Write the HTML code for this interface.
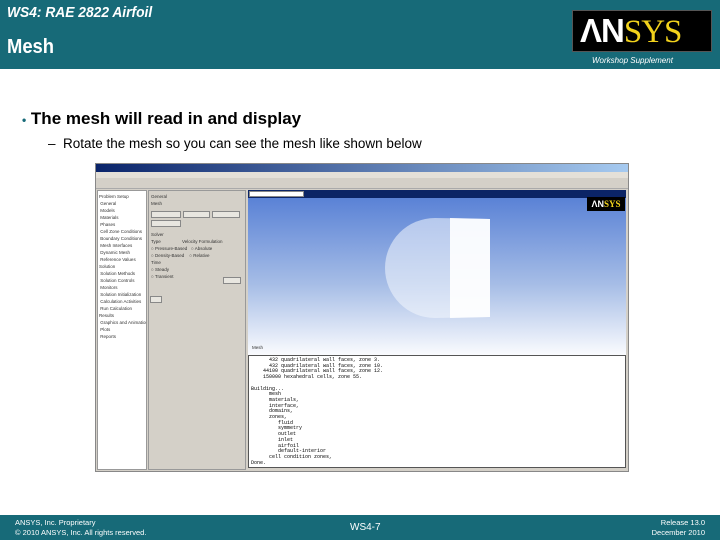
<!DOCTYPE html>
<html><head><style>
*{margin:0;padding:0;box-sizing:border-box}
body{width:720px;height:540px;position:relative;background:#fff;font-family:"Liberation Sans",sans-serif;overflow:hidden}
.a{position:absolute}
.hdr{left:0;top:0;width:720px;height:69px;background:#176a78}
.ftr{left:0;top:515px;width:720px;height:25px;background:#176a78;color:#fff;font-size:8px}
.mono{font-family:"Liberation Mono",monospace;font-size:5px;line-height:5.7px;color:#000;white-space:pre}
.t{font-size:4.5px;color:#333;line-height:7px;white-space:nowrap}
</style></head><body>
<div class="a hdr"></div>
<div class="a" style="left:7px;top:4px;color:#fff;font-size:15px;font-style:italic;font-weight:bold;transform:scaleX(.92);transform-origin:left">WS4: RAE 2822 Airfoil</div>
<div class="a" style="left:7px;top:36px;color:#fff;font-size:20px;font-weight:bold;transform:scaleX(.92);transform-origin:left">Mesh</div>
<div class="a" style="left:572px;top:10px;width:140px;height:42px;background:#000;border:1px solid #555;overflow:hidden"></div>
<div class="a" style="left:580px;top:11px;font-family:'Liberation Serif',serif;font-size:33px;line-height:40px;letter-spacing:-1px"><span style="color:#fff;font-family:'Liberation Sans';font-weight:bold">ΛN</span><span style="color:#f2d21c">SYS</span></div>
<div class="a" style="left:592px;top:56px;color:#fff;font-size:8px;font-style:italic">Workshop Supplement</div>

<div class="a" style="left:22px;top:109px;font-size:17px;font-weight:bold;color:#000"><span style="color:#176a78;font-size:12px">•</span> The mesh will read in and display</div>
<div class="a" style="left:48px;top:136px;font-size:13.5px;color:#000">– &nbsp;Rotate the mesh so you can see the mesh like shown below</div>

<div class="a" style="left:95px;top:163px;width:534px;height:309px;background:#d4d0c8;border:1px solid #888"></div>
<div class="a" style="left:96px;top:164px;width:532px;height:8px;background:linear-gradient(90deg,#0a246a,#a6caf0)"></div>
<div class="a" style="left:96px;top:172px;width:532px;height:6px;background:#e4e0d8"></div>
<div class="a" style="left:96px;top:178px;width:532px;height:11px;background:#d4d0c8;border-bottom:1px solid #aaa"></div>
<div class="a" style="left:97px;top:190px;width:50px;height:280px;background:#fff;border:1px solid #999;overflow:hidden"></div>
<div class="a t" style="left:99px;top:193px;width:47px;overflow:hidden">Problem Setup<br>&nbsp;General<br>&nbsp;Models<br>&nbsp;Materials<br>&nbsp;Phases<br>&nbsp;Cell Zone Conditions<br>&nbsp;Boundary Conditions<br>&nbsp;Mesh Interfaces<br>&nbsp;Dynamic Mesh<br>&nbsp;Reference Values<br>Solution<br>&nbsp;Solution Methods<br>&nbsp;Solution Controls<br>&nbsp;Monitors<br>&nbsp;Solution Initialization<br>&nbsp;Calculation Activities<br>&nbsp;Run Calculation<br>Results<br>&nbsp;Graphics and Animations<br>&nbsp;Plots<br>&nbsp;Reports</div>
<div class="a" style="left:148px;top:190px;width:98px;height:280px;background:#d4d0c8;border:1px solid #999"></div>
<div class="a t" style="left:151px;top:193px">General<br>Mesh</div>
<div class="a" style="left:151px;top:211px;width:30px;height:7px;background:#e8e6e0;border:1px solid #888"></div>
<div class="a" style="left:183px;top:211px;width:27px;height:7px;background:#e8e6e0;border:1px solid #888"></div>
<div class="a" style="left:212px;top:211px;width:28px;height:7px;background:#e8e6e0;border:1px solid #888"></div>
<div class="a" style="left:151px;top:220px;width:30px;height:7px;background:#e8e6e0;border:1px solid #888"></div>
<div class="a t" style="left:151px;top:231px">Solver<br>Type &nbsp; &nbsp; &nbsp; &nbsp; &nbsp; &nbsp; &nbsp; &nbsp; Velocity Formulation<br>○ Pressure-Based &nbsp; ○ Absolute<br>○ Density-Based &nbsp; &nbsp;○ Relative<br>Time<br>○ Steady<br>○ Transient</div>
<div class="a" style="left:223px;top:277px;width:18px;height:7px;background:#e8e6e0;border:1px solid #888"></div>
<div class="a" style="left:150px;top:296px;width:12px;height:7px;background:#e8e6e0;border:1px solid #888"></div>
<div class="a" style="left:248px;top:190px;width:378px;height:8px;background:#0b2466"></div>
<div class="a" style="left:249px;top:191px;width:55px;height:6px;background:#fff;border:1px solid #888"></div>
<div class="a" style="left:248px;top:198px;width:378px;height:157px;background:linear-gradient(#5a82d6,#a6bde6 55%,#fafbfe)"></div>
<div class="a" style="left:587px;top:197px;width:38px;height:14px;background:#000;color:#fff;font-size:9px;font-weight:bold;line-height:14px;text-align:center">ΛN<span style="color:#f2d21c;font-family:'Liberation Serif'">SYS</span></div>
<svg class="a" style="left:385px;top:217px" width="105" height="102"><path d="M50 1 L105 2 L105 100 L50 101 A50 50 0 0 1 50 1 Z" fill="#f4f7fd" opacity=".55"/><path d="M65 1 L105 2 L105 100 L65 101 Z" fill="#fff" opacity=".9"/></svg>
<div class="a t" style="left:252px;top:344px">Mesh</div>
<div class="a" style="left:248px;top:355px;width:378px;height:113px;background:#fff;border:1px solid #555"></div>
<div class="a mono" style="left:251px;top:358px">      432 quadrilateral wall faces, zone 3.
      432 quadrilateral wall faces, zone 10.
    44100 quadrilateral wall faces, zone 12.
    150000 hexahedral cells, zone 55.

Building...
      mesh
      materials,
      interface,
      domains,
      zones,
         fluid
         symmetry
         outlet
         inlet
         airfoil
         default-interior
      cell condition zones,
Done.</div>

<div class="a ftr"></div>
<div class="a" style="left:15px;top:518px;color:#fff;font-size:7.5px;line-height:10px">ANSYS, Inc. Proprietary<br>© 2010 ANSYS, Inc.  All rights reserved.</div>
<div class="a" style="left:350px;top:522px;color:#fff;font-size:10px">WS4-7</div>
<div class="a" style="right:15px;top:518px;color:#fff;font-size:7.5px;line-height:10px;text-align:right">Release 13.0<br>December 2010</div>
</body></html>
